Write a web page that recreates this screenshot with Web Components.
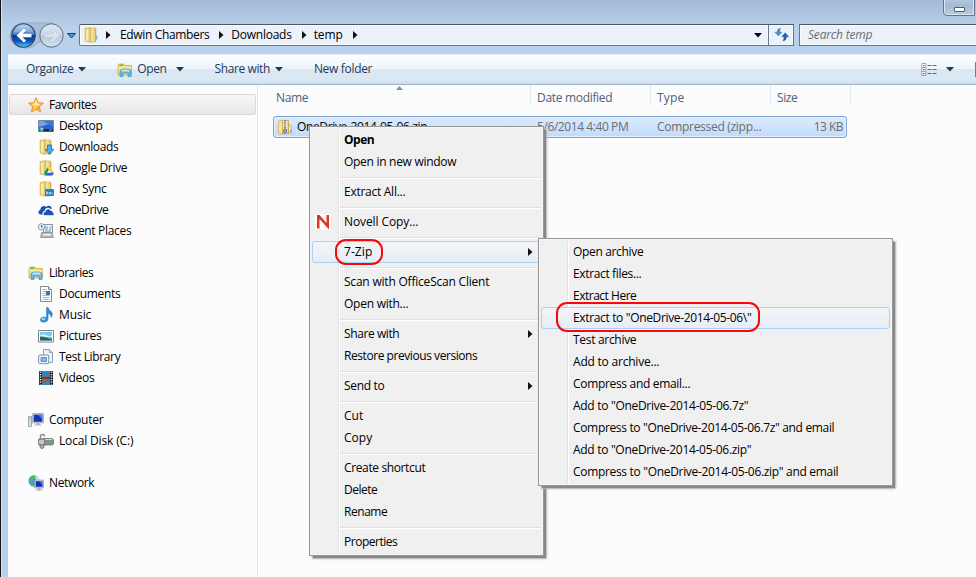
<!DOCTYPE html>
<html lang="en"><head><meta charset="utf-8"><title>temp</title>
<style>body{margin:0;overflow:hidden}</style></head><body>
<explorer-window></explorer-window>
<script>
const define=(name,css,html,ready)=>customElements.define(name,class extends HTMLElement{
  constructor(){super();this.attachShadow({mode:'open'});}
  connectedCallback(){
    if(!this.shadowRoot.firstChild)this.shadowRoot.innerHTML='<style>*{box-sizing:border-box}'+css+'</style>'+(typeof html==='function'?html(this):html);
    if(ready)ready(this);
  }
});

/* A single line of text whose tracking is adjusted to a given width. */
define('ui-label',':host{display:block;flex:none;white-space:pre;line-height:16px}span{display:inline-block}',
 e=>'<span>'+e.getAttribute('text').replace(/"/g,'&quot;')+'</span>',
 e=>{const s=e.shadowRoot.querySelector('span'),w=+e.getAttribute('w');
  if(w){const n=e.getAttribute('text').length;s.style.letterSpacing=((w+.3-s.getBoundingClientRect().width)/n).toFixed(3)+'px';}});

const folder='<path d="M2 1.5 7.5.5v15L2 14z" fill="#e3c868" stroke="#c9a94a" stroke-width=".5"/><path d="M3 2.5 5.5 2v12L3 13.5z" fill="#f7ebad"/><path d="M7.500 1H12q1 0 1 1v12q0 1-1 1H7.500z" fill="#ecd57e" stroke="#cfae50" stroke-width=".6"/><path d="M9 1.5v13" stroke="#f8edb8"/><path d="M12.5 2v12" stroke="#c7a547" stroke-width=".8"/>';
const lib='<path d="M1 3.5 2 2h5l1 1.500h6.500v9.500H1z" fill="#f4dc84" stroke="#cda948" stroke-width=".8"/><path d="M2.500 2.500H6V4H2.500z" fill="#56bf43"/><path d="M1.500 5.500h13v1h-13z" fill="#fdf3bb"/><path d="M3 14.500V10q0-3 3-3h5q3 0 3 3v4.500h-3V11H6v3.500z" fill="#67b9e2" stroke="#3f94c0" stroke-width=".7"/><path d="M4 9.500q0-2 2-2h5q2 0 2 2z" fill="#c0e8f8"/>';
const mon=(x,y,w,h)=>`<path d="M${x} ${y}h${w}v${h}h-${w}z" fill="#ccd3dc" stroke="#8994a3" stroke-width=".6"/><path d="M${x+1.2} ${y+1.2}h${w-2.4}v${h-2.4}h-${w-2.4}z" fill="#1431b8"/><path d="M${x+w/2} ${y+1.2}h${w/2-1.2}v${h/2}z" fill="#4d7cf0"/><path d="M${x+w/2-1.5} ${y+h}h3v1.500h2v1h-7v-1h2z" fill="#a9b3bd"/>`;
const icons={
 folder:folder+'<path d="M13.500 8.500v4" stroke="#6cb9dd" stroke-width="1.600"/>',
 lib,
 star:'<path d="M8 .8l2.100 4.900 5.300.5-4 3.500 1.200 5.300L8 12.300l-4.600 2.700 1.200-5.300-4-3.500 5.300-.5z" fill="#ffc94d" stroke="#e0852b" stroke-width=".9"/><path d="M8 2.500l1.400 4 3.600.4L8 8.500 3.500 7l3-.5z" fill="#fff0a0"/><path d="M8 11l3.200 2-.8-3.500" fill="#f99a2f"/>',
 desktop:'<path d="M.5 2.500h15v11H.5z" fill="#2f63c2" stroke="#7889a3"/><path d="M1 3h14v2L1 9z" fill="#6fa2e8"/><path d="M5 3h10v6z" fill="#3d76d7"/><path d="M1 11h14v2.500H1z" fill="#172746"/><circle cx="3.500" cy="11.500" r="2.200" fill="#43b1df"/><path d="M3 10h1.500v1.500H3z" fill="#f3e458"/><path d="M2 11.500h1.500V13H2z" fill="#3bba5b"/><path d="M11 12h3" stroke="#93a7c5"/>',
 downloads:folder+'<path d="M9.500 6h4v4.500h2.200L11.500 15.500 7.300 10.500h2.200z" fill="#48aff0" stroke="#1869b4" stroke-width=".8"/>',
 gdrive:folder+'<path d="M9.500 7.500 6 13l1.500 2.500L11 10z" fill="#16a065"/><path d="M9.500 7.500h3l3.400 5.500h-3z" fill="#ffcf3a"/><path d="M11 10l2 3H9z" fill="#fff"/><path d="M9 12.800h7l-1.500 2.700h-7z" fill="#245fe0"/>',
 box:folder+'<rect x="7" y="8" width="9" height="7" rx="1" fill="#1a83c9"/><path d="M8.500 10v3h1.500v-1.500h-1.500m3 0h1.500V13h-1.500zm3 0 1 1.500" fill="none" stroke="#d6efff" stroke-width=".7"/>',
 onedrive:'<path d="M3 12.500C-.5 12-.2 8.500 2.300 8 2.200 4.800 6 2.800 8.500 5 10 2.500 14 4 13.700 6.700l-1.200.2C10.500 4.800 7 6 6.500 9 4.200 9.300 4 11.500 5 12.500z" fill="#1751b5"/><path d="M7 13.500c-2.300-.2-2.300-3.600.3-3.700.2-3 4.200-3.600 5.200-1.200 1.600-.3 2.500.8 2.400 2 1.800.6 1.300 2.900-.5 2.900z" fill="#1751b5" stroke="#fff" stroke-width=".6"/>',
 recent:'<path d="M5.500 1.500h9V10h-9z" fill="#f5f8fa" stroke="#87919b"/><path d="M7 4h3M7 6h3m1.500-2h2M11 6h2M7 8h6" stroke="#4f9dc9"/><circle cx="3.500" cy="3.800" r="3.200" fill="#eef4f8" stroke="#8b9298"/><path d="M3.500 2v2H5" fill="none" stroke="#3774a2"/><path d="M3.500 9.500h10l2 5h-13z" fill="#b7babd" stroke="#7f8386" stroke-width=".7"/><path d="M5 11h8v1.500H5z" fill="#f2f2f2"/>',
 documents:'<path d="M2.500.5h8l3 3v12h-11z" fill="#fff" stroke="#838a92"/><path d="M10.500.5v3h3" fill="#dbe2ea" stroke="#838a92"/><path d="M4.500 3.500h4m-4 2h3.500m-3.500 2h3m-3 2h7m-7 2h7m-7 2h7" stroke="#8fa3b9" stroke-width=".8"/><path d="M8 5h4v4H8z" fill="#2b75be"/>',
 music:'<path d="M8.500.5h1.600q.5 2.700 3.200 4.100 2.300 2.600-.2 6 .2-3.400-3-4.200V12q-.4 3-4.300 3.200-4-.2-3.600-2.700.5-2.300 3.600-2.600 1.500-.1 2.700.6z" fill="#2e8fd8" stroke="#1f75ba" stroke-width=".5"/><ellipse cx="5.300" cy="12" rx="2" ry="1.200" fill="#8fd2f7"/>',
 pictures:'<path d="M.5 2.500h15v11.500H.5z" fill="#fff" stroke="#7e868d"/><path d="M2 4h12v8.500H2z" fill="#7fc8ef"/><path d="M2 7.500q4-2 7 0t5-.5v2H2z" fill="#e4f6fb"/><path d="M2 8.500q5-.5 8 1.500t4 0V11H2z" fill="#297550"/><path d="M2 10.800h12v1.700H2z" fill="#1d5e8c"/>',
 testlib:'<path d="M5.500.5h6l3 3v10h-9z" fill="#eaf2fa" stroke="#8da2b8"/><path d="M11.500.5v3h3" fill="none" stroke="#8da2b8"/><rect x=".7" y="6" width="10" height="8.700" rx="1" fill="#f4f9fd" stroke="#6f90b4"/><path d="M3 8.500h5.500v4H3z" fill="#8ab5ec" stroke="#5e8ed0"/>',
 videos:'<path d="M1 1h14v14H1z" fill="#20262b"/><path d="M4 1h8v14H4z" fill="#2689cb"/><path d="M4 4l4 3 4-4v4l-3 2 3 4-4-2-4 2V10l2-2z" fill="#b8533c"/><path d="M4 8h8" stroke="#17293d"/><path d="M2.500 1.500v13m11-13v13" stroke="#f4f4f4" stroke-width="1.500" stroke-dasharray="1.300 1.200"/>',
 computer:mon(4.5,1.5,11,9.5)+'<path d="M.5 4.500h3v10h-3z" fill="#d8dde2" stroke="#7f8993" stroke-width=".7"/><path d="M1.500 6.500h1" stroke="#3cb54d"/>',
 disk:'<path d="M5 5.500h9q2 1 2 3.200T14.500 12H5z" fill="#8e9191" stroke="#646868" stroke-width=".7"/><path d="M5.500 6.500h8.500" stroke="#d8dada"/><path d="M12.500 8v3" stroke="#38c736" stroke-width="1.500"/><path d="M2.500 6V3.500q0-2 2-2t2 2" fill="none" stroke="#8b8e8e" stroke-width="1.500"/><path d="M.7 6h6v6h-6z" fill="#abaeae" stroke="#727676"/><path d="M1 8h5M1 10h5" stroke="#e1e4e4"/><circle cx="4" cy="13.500" r="2" fill="#aaa" stroke="#777"/>',
 network:'<circle cx="6" cy="6" r="5.500" fill="#3c9be6"/><path d="M2 2q4-3 6-1L6 4 4 4.500 3.500 8 1 6zM4 8l3 1-1 2.500-3-1.500z" fill="#48bd4b"/><path d="M7 1q4 1 4.500 4H8z" fill="#cbeafc"/>'+mon(6.5,5,9.2,8),
 zip:'<path d="M1.500 2.500 6 .8v14.400L1.500 14z" fill="#f6e59a" stroke="#cda94d" stroke-width=".7"/><path d="M5.500 1.500h6v13h-6z" fill="#f1d97a" stroke="#c69e39" stroke-width=".7"/><path d="M8 1v9.500" stroke="#f5f6f8" stroke-width="3"/><path d="M8 1v9.500" stroke="#626b82" stroke-width="2" stroke-dasharray="1 .8"/><rect x="6.800" y="10" width="2.500" height="4" rx="1" fill="#a8adc1" stroke="#667"/><path d="M11.500 6H13l1.500 2v6h-3z" fill="#f8edb8" stroke="#d2962b" stroke-width=".7"/><path d="M13.500 11v2" stroke="#44aadd"/>',
 novell:'<path d="M0 0h16v16H0z" fill="#fff"/><path d="M2 1h2.500l7 8V1H14v14.500L4.500 5v9.500H2z" fill="#df3420"/>',
 refresh:'<path d="M6.500 1.200Q3 1.500 3 5.200H.8L4.500 9 8 5.200H5.800q-.2-2 .7-4z" fill="#3c91db" stroke="#2873b5" stroke-width=".4"/><path d="M9 14q3.500-.5 3.500-4.300h2.200L11.200 5.800 7.700 9.700H10q.1 2.300-1 4.300z" fill="#2c5fa5" stroke="#1b4988" stroke-width=".4"/>',
 views:'<path d="M.8 1.500h4v12h-4zm0 4h4m-4 4h4" fill="#fff" stroke="#8091aa" stroke-width=".8"/><path d="M2 3h1.500v1.200H2z" fill="#3c9b4a"/><path d="M2 7h1.500v1.200H2z" fill="#d12c2c"/><path d="M2 11h1.500v1.200H2z" fill="#2f5bc8"/><path d="M6.500 3.500h4m1 0h4m-9 4h4m1 0h4m-9 4h4m1 0h4" stroke="#566d8e"/>'
};
define('ui-icon',':host{display:block;flex:none;width:16px;height:16px}svg{display:block}',e=>`<svg width="16" height="16" viewBox="0 0 16 16">${icons[e.getAttribute('name')]}</svg>`);
define('ui-arrow',':host{display:block;flex:none}svg{display:block}',e=>e.getAttribute('dir')==='right'
 ?'<svg width="5" height="8" viewBox="0 0 5 8"><path d="M0 0 4.500 4 0 8z" fill="#111"/></svg>'
 :'<svg width="8" height="5" viewBox="0 0 8 5"><path d="M0 0h8L4 4.500z" fill="'+(e.getAttribute('color')||'#1e395b')+'"/></svg>');

define('nav-buttons',':host{display:block;flex:none;width:69px;height:27px}svg{display:block}',
`<svg width="69" height="27" viewBox="0 0 69 27"><defs>
<linearGradient id="b" x2="0" y2="1"><stop offset="0" stop-color="#a9c9ee"/><stop offset=".46" stop-color="#3e78c4"/><stop offset=".5" stop-color="#093a92"/><stop offset=".75" stop-color="#0b57b8"/><stop offset="1" stop-color="#4fd3fb"/></linearGradient>
<linearGradient id="g" x2="0" y2="1"><stop offset="0" stop-color="#dce7f3"/><stop offset=".48" stop-color="#ccd9e8"/><stop offset=".5" stop-color="#b7c8dc"/><stop offset="1" stop-color="#d3e2f1"/></linearGradient></defs>
<path d="M14 1h29q8 3 8 12t-8 12q-5 1-9-4-3-3-6 0-5 6-12 5Q2 25 1 14 2 2 14 1z" fill="#aabfd6" stroke="#97acc4"/>
<circle cx="14.500" cy="13.500" r="11.700" fill="url(#b)" stroke="#28446f" stroke-width="1.100"/><path d="M4.500 11q2-8 10-8t10 8q-9-3-20 0z" fill="#fff" opacity=".25"/>
<path d="M15 6.500 7.500 13.500l7.500 7 2-2-3.500-3.200h9v-3.500h-9l3.500-3.300z" fill="#fff"/>
<circle cx="42.500" cy="13.500" r="11.700" fill="url(#g)" stroke="#5f7084"/><path d="M43 6.500l7.500 7-7.500 7-2-2 3.500-3.200h-9v-3.500h9l-3.500-3.300z" fill="#d9e4ef" stroke="#b6c6d8" stroke-width=".6"/>
<path d="M58.500 11.500h8l-4 4.500z" fill="#38a0d8" stroke="#1c3d66"/></svg>`);

define('address-row',`:host{display:flex;height:54px;padding:22px 0 0 1px;align-items:flex-start;overflow:hidden}
nav-buttons{margin-right:1px}
.box{display:flex;flex:none;align-items:center;height:22px;border:1px solid #68788c;border-top-color:#50565e;background:#ecf2fa;color:#000;margin-top:2px;box-shadow:inset 0 0 0 1px #f6fafd}
.addr{width:690px;padding-left:3px;border-radius:2px 0 0 2px}
.addr ui-arrow[dir=right]{margin:0 7px 0 10px}
.grow{flex:1}.refresh{width:26px;margin-left:-1px;padding-left:5px}
.search{width:190px;margin-left:5px;padding-left:8px;font-style:italic;color:#6d6d6d}`,
`<nav-buttons></nav-buttons><div class="box addr"><ui-icon name="folder"></ui-icon>
<ui-arrow dir="right" style="margin:0 9px 0 7px"></ui-arrow><ui-label text="Edwin Chambers" w="89"></ui-label>
<ui-arrow dir="right"></ui-arrow><ui-label text="Downloads" w="60"></ui-label>
<ui-arrow dir="right"></ui-arrow><ui-label text="temp" w="29"></ui-label><ui-arrow dir="right"></ui-arrow>
<span class="grow"></span><ui-arrow color="#00003c" style="margin-right:6px"></ui-arrow></div>
<div class="box refresh"><ui-icon name="refresh"></ui-icon></div><div class="box search"><ui-label text="Search temp" w="64"></ui-label></div>`);

define('command-bar',`:host{display:flex;align-items:center;height:31px;padding-left:18px;color:#1e395b;border-top:1px solid #e4edf8;border-bottom:1px solid #a0b4cd;background:linear-gradient(#fdfeff 0,#ecf5fc 48%,#dce7f4 50%,#dce7f5 88%,#cbdaeb)}
ui-label{margin-top:-1px}
ui-arrow{margin-left:5px}.sep{width:2px;height:15px;background:#6b7f99;margin-left:21px}`,
`<ui-label text="Organize" w="47"></ui-label><ui-arrow></ui-arrow>
<ui-icon name="lib" style="margin:1px 4px 0 31px"></ui-icon><ui-label text="Open" w="29"></ui-label><ui-arrow style="margin-left:9px"></ui-arrow>
<ui-label text="Share with" w="55" style="margin-left:31px"></ui-label><ui-arrow></ui-arrow>
<ui-label text="New folder" w="58" style="margin-left:31px"></ui-label>
<ui-icon name="views" style="margin-left:549px"></ui-icon><ui-arrow style="margin-left:9px"></ui-arrow><span class="sep"></span>`);

define('tree-item',`:host{display:flex;align-items:center;height:21px;padding-left:20px;gap:5px;color:#000}
:host([child]){padding-left:30px}
:host([selected]){margin:0 1px;border:1px solid #d9d9d9;border-radius:2px;background:linear-gradient(#f8f8f8,#e6e6e6);padding-left:18px;box-sizing:border-box}`,
e=>`<ui-icon name="${e.getAttribute('icon')}"></ui-icon><ui-label text="${e.getAttribute('text')}" w="${e.getAttribute('w')}"></ui-label>`);
const tree=[['star','Favorites',47,0],['desktop','Desktop',43],['downloads','Downloads',59],['gdrive','Google Drive',68],['box','Box Sync',47],['onedrive','OneDrive',49],['recent','Recent Places',72],null,
['lib','Libraries',44,0],['documents','Documents',61],['music','Music',32],['pictures','Pictures',42],['testlib','Test Library',61],['videos','Videos',35],null,
['computer','Computer',54,0],['disk','Local Disk (C:)',74],null,['network','Network',45,0]];
define('nav-tree',':host{display:block;width:250px;box-sizing:border-box;flex:none;border-right:1px solid #dbe6f2;padding-top:9px}.gap{height:21px}',
()=>tree.map((t,i)=>t?`<tree-item icon="${t[0]}" text="${t[1]}" w="${t[2]}"${t[3]===0?'':' child'}${i?'':' selected'}></tree-item>`:'<div class="gap"></div>').join(''));

define('file-list',`:host{display:block;flex:1;padding-left:15px;position:relative}
.head,.row{display:grid;grid-template-columns:258px 120px 120px 80px;align-items:center}
.row{grid-template-columns:257px 120px 120px 75px}
.head{height:26px;color:#4c607a}.head>div{align-self:start;padding:5px 0 0 6px;height:19px;border-right:1px solid #e0eaf6}
.head>:first-child{padding-left:3px}
.row{width:574px;height:22px;margin-top:5px;border:1px solid #7da2ce;border-radius:3px;box-shadow:inset 0 0 0 1px #e5f0fd;background:linear-gradient(#dcebfc,#c1dbfc);color:#6d6d6d}
.row>div{display:flex;align-items:center;padding-left:6px}.name{color:#000}.row>.name{padding-left:3px;gap:4px}.row>.size{justify-content:flex-end;padding:0 3px 0 0}
.sort{position:absolute;left:138px;top:1px}`,
`<svg class="sort" width="7" height="4" viewBox="0 0 7 4"><path d="M0 4 3.500 0 7 4z" fill="#6c9ab9"/></svg>
<div class="head"><div><ui-label text="Name" w="32"></ui-label></div><div><ui-label text="Date modified" w="75"></ui-label></div><div><ui-label text="Type" w="27"></ui-label></div><div><ui-label text="Size" w="20"></ui-label></div></div>
<div class="row"><div class="name"><ui-icon name="zip"></ui-icon><ui-label text="OneDrive-2014-05-06.zip" w="130"></ui-label></div><div><ui-label text="5/6/2014 4:40 PM" w="91"></ui-label></div><div><ui-label text="Compressed (zipp..." w="104"></ui-label></div><div class="size"><ui-label text="13 KB" w="29"></ui-label></div></div>`);

define('menu-item',`:host{display:flex;box-sizing:border-box;align-items:center;height:22px;padding-left:31px;position:relative;color:#000;border:1px solid transparent;border-radius:3px}
:host([hot]){border-color:#aecff7;background:linear-gradient(#f2f4f8,#e7edf6)}
:host([bold]){font-weight:bold}
ui-icon{margin:0 13px 0 -29px}ui-arrow{margin:0 7px 0 auto}
.ring{position:absolute;border:2px solid #f80808;left:var(--l);top:var(--t);width:var(--w);height:var(--h);border-radius:11px}`,
e=>{const a=n=>e.getAttribute(n);return (a('icon')?`<ui-icon name="${a('icon')}"></ui-icon>`:'')+`<ui-label text="${a('text').replace(/"/g,'&quot;')}" w="${a('w')}"></ui-label>`+(a('sub')!==null?'<ui-arrow dir="right"></ui-arrow>':'')+(a('ring')?`<div class="ring" style="${a('ring')}"></div>`:'')});
define('menu-rule',':host{display:block;box-sizing:border-box;height:8px;padding-top:4px;margin:0 0 0 28px}div{height:2px;background:#fff;border-top:1px solid #e0e0e0}','<div></div>');
define('context-menu',`:host{display:block;box-sizing:border-box;position:absolute;border:1px solid #979797;padding:2px;background:linear-gradient(90deg,transparent 28px,#e2e3e3 28px,#e2e3e3 29px,#fff 29px,#fff 30px,transparent 30px) 0 2px/100% calc(100% - 4px) no-repeat,#f0f0f0;box-shadow:inset 0 0 0 1px #f5f5f5,3px 3px 1px -1px #888,3px 3px 2px 0 #bbb}`,'<slot></slot>');

const m=(text,w,extra='')=>`<menu-item text='${text}' w="${w}" ${extra}></menu-item>`,r='<menu-rule></menu-rule>';
define('explorer-window',`:host{display:block;box-sizing:border-box;position:relative;width:976px;height:577px;overflow:hidden;font:12px/16px "Open Sans","Noto Sans",sans-serif;background:#b9d1ea;border-left:1px solid #111}
.frame{height:100%;padding-left:6px;background:linear-gradient(#a3bbd8,#b9d1ea 28px,#b9d0ea);border-left:1px solid #d8e6f5}
.body{display:flex;height:492px;background:#fcfcfc}
.min{position:absolute;left:942px;top:-4px;width:32px;height:20px;border:1px solid #63758e;border-radius:0 0 0 4px;box-shadow:inset 0 0 0 1px #d7e5f4;background:linear-gradient(#b8cbe1,#a3bad4 50%,#b8cde5);display:flex;align-items:flex-end;justify-content:center;padding-bottom:3px}
.min i{width:11px;height:5px;background:#fff;border:1px solid #545b68;border-radius:1px}
.m1{left:308px;top:126px;width:235px;height:430px}.m2{left:537px;top:238px;width:355px;height:248px}`,
`<div class="frame"><address-row></address-row><command-bar></command-bar><div class="body"><nav-tree></nav-tree><file-list></file-list></div></div><div class="min"><i></i></div>
<context-menu class="m1">${m('Open',30,'bold')}${m('Open in new window',112)}${r}${m('Extract All...',61)}${r}${m('Novell Copy...',74,'icon="novell"')}${r}${m('7-Zip',28,'hot sub ring="--l:22px;--t:-3px;--w:48px;--h:26px"')}${r}${m('Scan with OfficeScan Client',145)}${m('Open with...',64)}${r}${m('Share with',55,'sub')}${m('Restore previous versions',133)}${r}${m('Send to',40,'sub')}${r}${m('Cut',19)}${m('Copy',28)}${r}${m('Create shortcut',81)}${m('Delete',33)}${m('Rename',43)}${r}${m('Properties',53)}</context-menu>
<context-menu class="m2">${m('Open archive',70)}${m('Extract files...',68)}${m('Extract Here',63)}${m('Extract to "OneDrive-2014-05-06&#92;"',178,'hot ring="--l:14px;--t:-6px;--w:204px;--h:30px"')}${m('Test archive',63)}${m('Add to archive...',86)}${m('Compress and email...',117)}${m('Add to "OneDrive-2014-05-06.7z"',175)}${m('Compress to "OneDrive-2014-05-06.7z" and email',261)}${m('Add to "OneDrive-2014-05-06.zip"',178)}${m('Compress to "OneDrive-2014-05-06.zip" and email',265)}</context-menu>`);
</script></body></html>
